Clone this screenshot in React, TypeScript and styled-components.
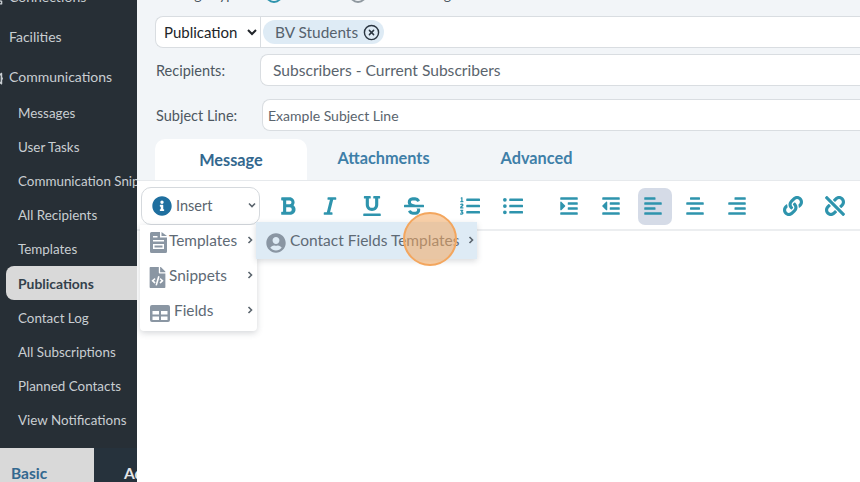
import React from "react";
import styled, { createGlobalStyle } from "styled-components";
import {
  FaAlignCenter, FaAlignLeft, FaAlignRight, FaBold, FaBullhorn, FaFileCode, FaIndent, FaInfoCircle, FaItalic,
  FaLink, FaListOl, FaListUl, FaNetworkWired, FaOutdent, FaStrikethrough, FaUnderline, FaUnlink, FaUserCircle,
} from "react-icons/fa";
import { FiXCircle } from "react-icons/fi";

const Global = createGlobalStyle`
  html, body { margin: 0; padding: 0; width: 860px; height: 482px; overflow: hidden; background: #fff; }
  body { font-family: Lato, "Liberation Sans", sans-serif; }
  #root { width: 860px; height: 482px; }
`;

const Page = styled.div`
  display: flex;
  width: 860px;
  height: 482px;
  overflow: hidden;
`;

const Sidebar = styled.aside`
  flex: 0 0 137px;
  width: 137px;
  height: 482px;
  background: #272f36;
  display: flex;
  flex-direction: column;
  overflow: hidden;
`;

const NavList = styled.nav`
  flex: 1;
  min-height: 0;
  margin-top: -21px;
  display: flex;
  flex-direction: column;
`;

const NavGroup = styled.div<{ $gap?: number }>`
  height: 34px;
  flex: none;
  margin-bottom: ${p => p.$gap ?? 0}px;
  display: flex;
  align-items: center;
  padding-left: 9px;
  font-size: 14px;
  color: #c9ced2;
  white-space: nowrap;
  position: relative;
`;

const NavCut = styled.span`
  position: absolute;
  left: -11px;
  top: 13px;
  color: #c9ced2;
  font-size: 14px;
  display: flex;
`;

const NavItem = styled.div<{ $active?: boolean }>`
  height: 34px;
  flex: none;
  margin-left: ${p => (p.$active ? 6 : 0)}px;
  margin-bottom: ${p => (p.$active ? 1 : 0)}px;
  padding-left: ${p => (p.$active ? 12 : 18)}px;
  display: flex;
  align-items: center;
  font-size: ${p => (p.$active ? 13.9 : 13.4)}px;
  white-space: nowrap;
  color: ${p => (p.$active ? "#33414c" : "#c9ced2")};
  font-weight: ${p => (p.$active ? 700 : 400)};
  background: ${p => (p.$active ? "#d9d9d9" : "transparent")};
  border-radius: 8px 0 0 8px;
`;

const BottomTabs = styled.div`
  flex: 0 0 33px;
  display: flex;
  background: #26323c;
`;

const BottomTab = styled.div<{ $active?: boolean }>`
  flex: 0 0 ${p => (p.$active ? 94 : 43)}px;
  padding: 16px 0 0 ${p => (p.$active ? 11 : 30)}px;
  box-sizing: border-box;
  font-size: 15.5px;
  font-weight: 700;
  white-space: nowrap;
  overflow: hidden;
  color: ${p => (p.$active ? "#33688f" : "#e4e6e8")};
  background: ${p => (p.$active ? "#d9d9d9" : "transparent")};
`;

const Main = styled.main`
  flex: 1;
  min-width: 0;
  height: 482px;
  background: #f2f5f8;
  display: flex;
  flex-direction: column;
  position: relative;
  overflow: hidden;
`;

const Form = styled.div`
  padding: 0 0 0 18px;
  margin-top: -15px;
  display: flex;
  flex-direction: column;
`;

const TypeRow = styled.div`
  height: 18px;
  margin-bottom: 13px;
  display: flex;
  align-items: center;
  font-size: 14px;
  color: #4a5560;
  white-space: nowrap;
`;

const TypeLabel = styled.span`
  width: 110px;
`;

const Radio = styled.span<{ $on?: boolean }>`
  width: 14px;
  height: 14px;
  margin-right: 8px;
  border: 2px solid ${p => (p.$on ? "#2e94ad" : "#8f989f")};
  border-radius: 50%;
  flex: none;
`;

const TypeOption = styled.span<{ $width: number }>`
  width: ${p => p.$width}px;
`;

const FieldRow = styled.div<{ $gap: number }>`
  display: flex;
  align-items: center;
  height: 32px;
  margin-bottom: ${p => p.$gap}px;
`;

const Label = styled.label<{ $width: number }>`
  flex: 0 0 ${p => p.$width}px;
  padding-left: 1px;
  box-sizing: border-box;
  font-size: 14.5px;
  color: #4d5761;
`;

const Select = styled.select`
  flex: 0 0 105px;
  height: 32px;
  padding: 0 0 0 4px;
  background: #fff;
  border: 1px solid #d9dde1;
  border-right: 0;
  border-radius: 8px 0 0 8px;
  font: 15px Lato, sans-serif;
  color: #212529;
  outline: none;
`;

const Field = styled.div<{ $joined?: boolean; $small?: boolean }>`
  flex: 1;
  height: 32px;
  box-sizing: border-box;
  background: #fff;
  border: 1px solid #d9dde1;
  border-right: 0;
  border-radius: ${p => (p.$joined ? 0 : "8px 0 0 8px")};
  display: flex;
  align-items: center;
  padding-left: ${p => (p.$joined ? 2 : p.$small ? 5 : 12)}px;
  padding-top: ${p => (p.$small ? 1 : 0)}px;
  font-size: ${p => (p.$small ? 14 : 15.6)}px;
  color: #5a646d;
  white-space: nowrap;
`;

const Chip = styled.span`
  height: 24px;
  padding: 0 4px 0 12px;
  display: inline-flex;
  align-items: center;
  gap: 5px;
  border-radius: 12px;
  background: #deebf5;
  font-size: 15.4px;
  color: #56626d;
`;

const ChipClose = styled.span`
  display: flex;
  color: #2a3540;
  font-size: 17px;
`;

const TabBar = styled.div`
  display: flex;
  height: 41px;
  align-items: stretch;
`;

const Tab = styled.div<{ $active?: boolean; $width: number }>`
  flex: 0 0 ${p => p.$width}px;
  display: flex;
  align-items: center;
  justify-content: center;
  font-size: 16.3px;
  font-weight: 700;
  color: ${p => (p.$active ? "#33688f" : "#3f7fa8")};
  background: ${p => (p.$active ? "#fff" : "transparent")};
  border-radius: 10px 10px 0 0;
  padding-bottom: ${p => (p.$active ? 1 : 5)}px;
  box-sizing: border-box;
`;

const Editor = styled.section`
  flex: 1;
  background: #fff;
  border-top: 1px solid #e6e9ec;
  display: flex;
  flex-direction: column;
`;

const Toolbar = styled.div`
  height: 50px;
  box-sizing: border-box;
  border-bottom: 2px solid #eceef0;
  padding-top: 2px;
  display: flex;
  align-items: center;
  padding-left: 4px;
`;

const InsertButton = styled.div`
  flex: 0 0 119px;
  height: 38px;
  box-sizing: border-box;
  border: 1px solid #d5d9dd;
  border-radius: 10px;
  background: #fff;
  display: flex;
  align-items: center;
  padding: 0 3px 2px 10px;
  font-size: 14.5px;
  color: #5a646d;
  margin-right: 11px;
`;

const InsertIcon = styled.span`
  display: flex;
  color: #1f6f9f;
  font-size: 20px;
  margin-right: 4px;
  margin-bottom: -2px;
`;

const Chevron = styled.svg<{ $down?: boolean }>`
  width: 8px;
  height: 8px;
  margin-left: auto;
  fill: none;
  stroke: #5a646d;
  stroke-width: 1.6;
  transform: ${p => (p.$down ? "rotate(90deg)" : "none")};
`;

const ToolGroup = styled.div<{ $end?: number; $gap?: number }>`
  display: flex;
  gap: ${p => p.$gap ?? 8}px;
  margin-right: ${p => p.$end ?? 22}px;
`;

const ToolButton = styled.div<{ $active?: boolean }>`
  width: 34px;
  height: 37px;
  box-sizing: border-box;
  display: flex;
  align-items: center;
  justify-content: center;
  color: #2e94ad;
  font-size: 20px;
  border-radius: 7px;
  background: ${p => (p.$active ? "#d5dbe7" : "transparent")};
  margin: ${p => (p.$active ? "0 -2px 0 2px" : 0)};
  padding-right: ${p => (p.$active ? 4 : 0)}px;
`;

const Menu = styled.div`
  position: absolute;
  left: 3px;
  top: 225px;
  width: 117px;
  height: 106px;
  background: #fff;
  box-shadow: 0 2px 6px rgba(60, 70, 80, 0.22);
  border-radius: 0 0 4px 4px;
  display: flex;
  flex-direction: column;
`;

const MenuItem = styled.div`
  height: 36px;
  box-sizing: border-box;
  display: flex;
  align-items: center;
  padding: 0 3px 6px 10px;
  font-size: 15.4px;
  color: #5e6a75;
`;

const MenuIcon = styled.span<{ $width: number }>`
  flex: 0 0 ${p => p.$width}px;
  min-width: 0;
  display: flex;
  align-items: center;
  color: #8a96a3;
  font-size: 21px;
  padding-top: 3px;
  margin-bottom: -3px;
  box-sizing: content-box;
`;

const CodeIcon = styled(FaFileCode)`
  flex: none;
  margin-left: -3px;
`;

const SubMenu = styled.div`
  position: absolute;
  left: 119px;
  top: 222px;
  width: 221px;
  height: 37px;
  box-sizing: border-box;
  padding: 0 2px 1px 10px;
  background: #deebf5;
  box-shadow: 0 2px 6px rgba(60, 70, 80, 0.2);
  display: flex;
  align-items: center;
  font-size: 15.5px;
  color: #5e6a75;
  white-space: nowrap;
`;

const SubIcon = styled.span`
  display: flex;
  color: #8a96a3;
  font-size: 20px;
  margin-right: 4px;
  padding-top: 4px;
  margin-bottom: -2px;
`;

const Pointer = styled.div`
  position: absolute;
  left: 266px;
  top: 212px;
  width: 54px;
  height: 54px;
  box-sizing: border-box;
  border-radius: 50%;
  background: rgba(243, 168, 96, 0.55);
  border: 2px solid #f3a65e;
`;

const Arrow = ({ down }: { down?: boolean }) => (
  <Chevron viewBox="0 0 8 8" $down={down}><path d="M2.5 1 5.5 4 2.5 7" /></Chevron>
);

const DocIcon = () => (
  <svg width="17" height="21" viewBox="0 0 17 21" fill="currentColor">
    <path fillRule="evenodd" d="M1.5 0H10v5.5h7v14a1.5 1.5 0 0 1-1.500 1.500h-14A1.500 1.500 0 0 1 0 19.500v-18A1.500 1.500 0 0 1 1.500 0ZM3 4v1.500h4.500V4ZM3 8v1.500h11V8Zm0 4v5h11v-5Zm1.500 1.500h8v2h-8Z" />
    <path d="M11.500 0 17 4h-5.500Z" />
  </svg>
);

const GridIcon = () => (
  <svg width="20" height="17" viewBox="0 0 20 17" fill="currentColor">
    <path fillRule="evenodd" d="M2 0h16a2 2 0 0 1 2 2v13a2 2 0 0 1-2 2H2a2 2 0 0 1-2-2V2a2 2 0 0 1 2-2Zm.500 6v3.500h6.500V6Zm8.500 0v3.500h6.500V6Zm-8.500 5.500V15h6.500v-3.500Zm8.500 0V15h6.500v-3.500Z" />
  </svg>
);

const navItems = ["Messages", "User Tasks", "Communication Snippets", "All Recipients", "Templates", "Publications", "Contact Log", "All Subscriptions", "Planned Contacts", "View Notifications"];

export default function App() {
  return (
    <Page>
      <Global />
      <Sidebar>
        <NavList>
          <NavGroup $gap={6}><NavCut><FaNetworkWired /></NavCut>Connections</NavGroup>
          <NavGroup $gap={6}>Facilities</NavGroup>
          <NavGroup $gap={3}><NavCut><FaBullhorn /></NavCut>Communications</NavGroup>
          {navItems.map(n => <NavItem key={n} $active={n === "Publications"}>{n}</NavItem>)}
        </NavList>
        <BottomTabs>
          <BottomTab $active>Basic</BottomTab>
          <BottomTab>Advanced</BottomTab>
        </BottomTabs>
      </Sidebar>
      <Main>
        <Form>
          <TypeRow>
            <TypeLabel>Message Type:</TypeLabel>
            <Radio $on />
            <TypeOption $width={58}>Email</TypeOption>
            <Radio />
            <TypeOption $width={120}>Text Message</TypeOption>
          </TypeRow>
          <FieldRow $gap={6}>
            <Select defaultValue="Publication"><option>Publication</option></Select>
            <Field $joined><Chip>BV Students<ChipClose><FiXCircle /></ChipClose></Chip></Field>
          </FieldRow>
          <FieldRow $gap={13}>
            <Label $width={105}>Recipients:</Label>
            <Field>Subscribers - Current Subscribers</Field>
          </FieldRow>
          <FieldRow $gap={8}>
            <Label $width={107}>Subject Line:</Label>
            <Field $small>Example Subject Line</Field>
          </FieldRow>
          <TabBar>
            <Tab $active $width={152}>Message</Tab>
            <Tab $width={153}>Attachments</Tab>
            <Tab $width={153}>Advanced</Tab>
          </TabBar>
        </Form>
        <Editor>
          <Toolbar>
            <InsertButton>
              <InsertIcon><FaInfoCircle /></InsertIcon>Insert<Arrow down />
            </InsertButton>
            <ToolGroup>
              <ToolButton><FaBold /></ToolButton>
              <ToolButton><FaItalic /></ToolButton>
              <ToolButton><FaUnderline /></ToolButton>
              <ToolButton><FaStrikethrough /></ToolButton>
            </ToolGroup>
            <ToolGroup $gap={9}>
              <ToolButton><FaListOl /></ToolButton>
              <ToolButton><FaListUl /></ToolButton>
            </ToolGroup>
            <ToolGroup>
              <ToolButton><FaIndent /></ToolButton>
              <ToolButton><FaOutdent /></ToolButton>
              <ToolButton $active><FaAlignLeft /></ToolButton>
              <ToolButton><FaAlignCenter /></ToolButton>
              <ToolButton><FaAlignRight /></ToolButton>
            </ToolGroup>
            <ToolGroup $end={0}>
              <ToolButton><FaLink /></ToolButton>
              <ToolButton><FaUnlink /></ToolButton>
            </ToolGroup>
          </Toolbar>
        </Editor>
        <Menu>
          <MenuItem><MenuIcon $width={19}><DocIcon /></MenuIcon>Templates<Arrow /></MenuItem>
          <MenuItem><MenuIcon $width={19}><CodeIcon /></MenuIcon>Snippets<Arrow /></MenuItem>
          <MenuItem><MenuIcon $width={24}><GridIcon /></MenuIcon>Fields<Arrow /></MenuItem>
        </Menu>
        <SubMenu><SubIcon><FaUserCircle /></SubIcon>Contact Fields Templates<Arrow /></SubMenu>
        <Pointer />
      </Main>
    </Page>
  );
}
